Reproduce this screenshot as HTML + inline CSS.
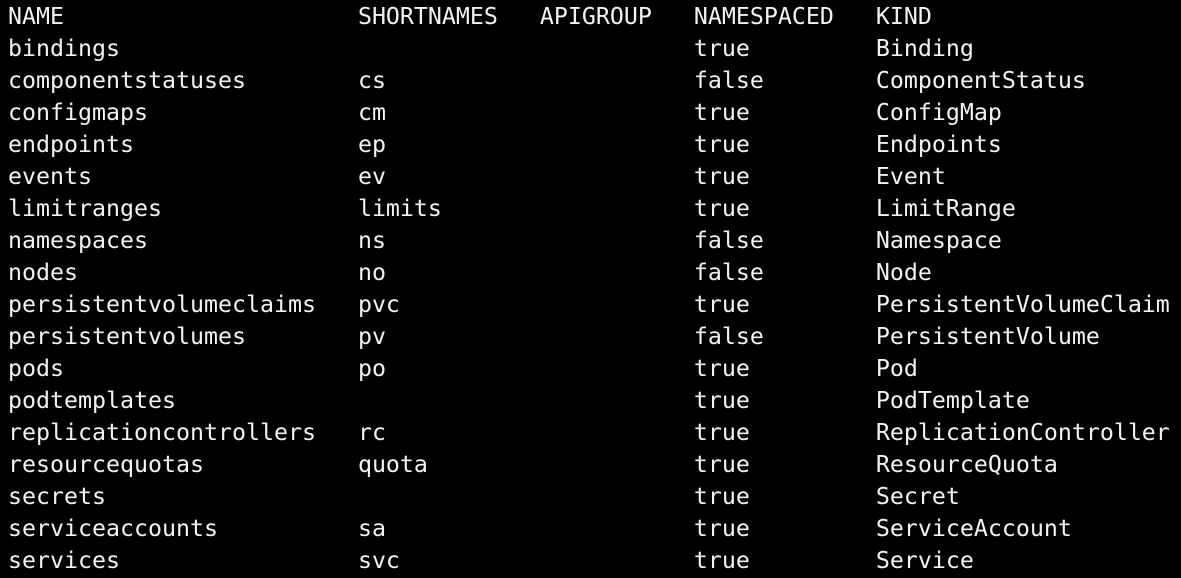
<!DOCTYPE html>
<html><head><meta charset="utf-8"><style>
html,body{margin:0;padding:0;background:#000;width:1181px;height:578px;overflow:hidden}
pre{margin:0;padding:1px 0 0 8px;font-family:"DejaVu Sans Mono","Liberation Mono",monospace;font-size:23.25px;line-height:32px;color:#f2f2f2;white-space:pre}
</style></head><body><pre>NAME                     SHORTNAMES   APIGROUP   NAMESPACED   KIND
bindings                                         true         Binding
componentstatuses        cs                      false        ComponentStatus
configmaps               cm                      true         ConfigMap
endpoints                ep                      true         Endpoints
events                   ev                      true         Event
limitranges              limits                  true         LimitRange
namespaces               ns                      false        Namespace
nodes                    no                      false        Node
persistentvolumeclaims   pvc                     true         PersistentVolumeClaim
persistentvolumes        pv                      false        PersistentVolume
pods                     po                      true         Pod
podtemplates                                     true         PodTemplate
replicationcontrollers   rc                      true         ReplicationController
resourcequotas           quota                   true         ResourceQuota
secrets                                          true         Secret
serviceaccounts          sa                      true         ServiceAccount
services                 svc                     true         Service</pre></body></html>
